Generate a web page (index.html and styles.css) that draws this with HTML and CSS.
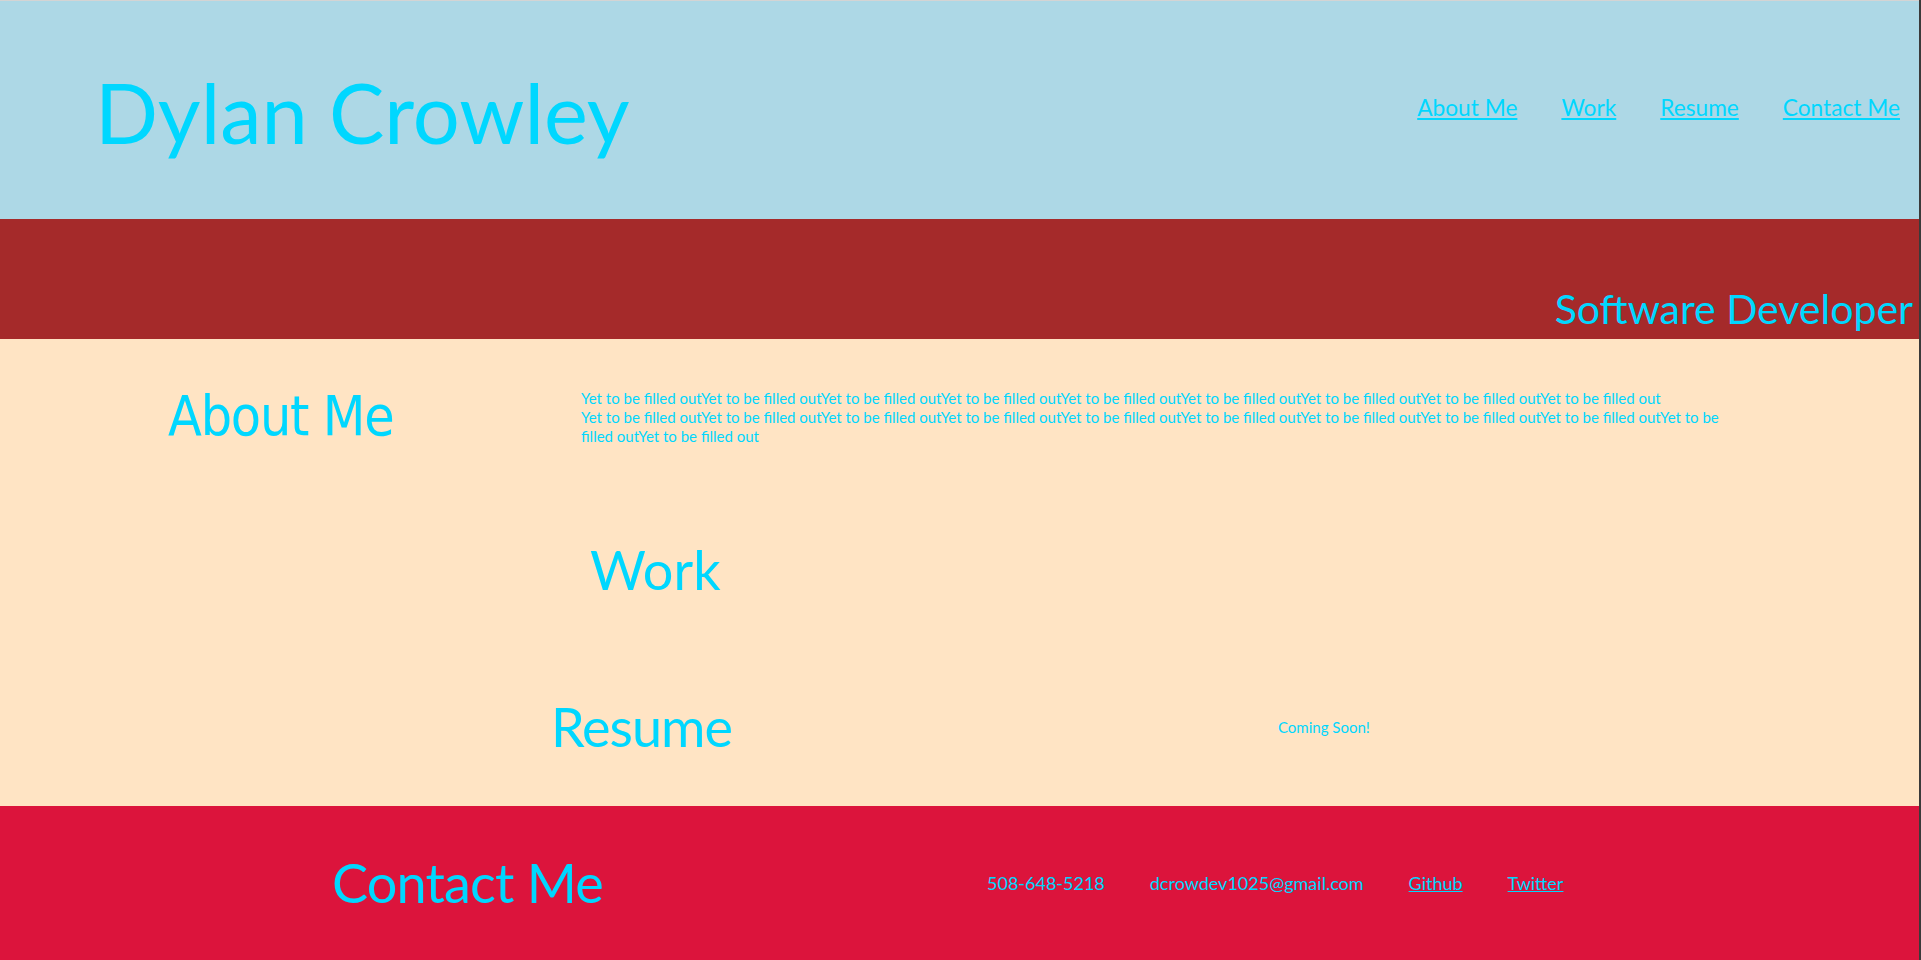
FILE: index.html
```html
<!DOCTYPE html>
<html lang="en">
<head>
<meta charset="utf-8">
<title>Dylan Crowley</title>
<link rel="stylesheet" href="styles.css">
</head>
<body>
<div class="page">
  <header class="top">
    <h1 class="name">Dylan Crowley</h1>
    <nav class="nav">
      <a href="#about">About Me</a>
      <a href="#work">Work</a>
      <a href="#resume">Resume</a>
      <a href="#contact">Contact Me</a>
    </nav>
  </header>
  <div class="banner">
    <span class="role">Software Developer</span>
  </div>
  <main class="main">
    <section class="about" id="about">
      <h2 class="about-title">About Me</h2>
      <p class="about-text">Yet to be filled outYet to be filled outYet to be filled outYet to be filled outYet to be filled outYet to be filled outYet to be filled outYet to be filled outYet to be filled out<br>Yet to be filled outYet to be filled outYet to be filled outYet to be filled outYet to be filled outYet to be filled outYet to be filled outYet to be filled outYet to be filled outYet to be filled outYet to be filled out</p>
    </section>
    <section class="work" id="work">
      <h2 class="heading">Work</h2>
    </section>
    <section class="resume" id="resume">
      <h2 class="heading resume-title">Resume</h2>
      <span class="soon">Coming Soon!</span>
    </section>
  </main>
  <footer class="contact" id="contact">
    <h2 class="heading contact-title">Contact Me</h2>
    <div class="contact-items">
      <span>508-648-5218</span>
      <span>dcrowdev1025@gmail.com</span>
      <a href="#">Github</a>
      <a href="#">Twitter</a>
    </div>
  </footer>
</div>
</body>
</html>
```
FILE: styles.css
```css
html, body {
  margin: 0;
  padding: 0;
}
body {
  font-family: Lato, "Open Sans", sans-serif;
  color: #00d7ff;
  background: #ffe4c4;
}
.page {
  border-right: 2px solid #3a3a3a;
}
a {
  color: #00d7ff;
}

.top {
  box-sizing: border-box;
  height: 219px;
  border-top: 1px solid #d4d4d4;
  background: #add8e6;
  display: flex;
  justify-content: space-between;
  align-items: center;
  padding: 0 19px 0 95px;
}
.name {
  margin: 5px 0 0;
  font-size: 83px;
  font-weight: 400;
  line-height: 1;
}
.nav {
  display: flex;
  gap: 44px;
  font-size: 22.7px;
  line-height: 1;
  margin-top: -4px;
}

.banner {
  box-sizing: border-box;
  height: 120px;
  background: #a52a2a;
  display: flex;
  justify-content: flex-end;
  align-items: flex-end;
  padding: 0 6px 10px 0;
}
.role {
  font-size: 41px;
  line-height: 1;
}

.main {
  background: #ffe4c4;
  padding: 50px 0 52px;
}
.heading {
  margin: 0;
  font-size: 54px;
  font-weight: 400;
  line-height: 1;
}
.about {
  display: flex;
  align-items: flex-start;
  padding-left: 168px;
}
.about-title {
  margin: 0;
  width: 413px;
  flex: none;
  font-family: "DejaVu Sans Condensed", "DejaVu Sans", sans-serif;
  font-size: 55px;
  font-weight: 400;
  line-height: 1;
  letter-spacing: -1.2px;
}
.about-text {
  margin: 0;
  width: 1150px;
  font-size: 15px;
  line-height: 19px;
}
.work {
  padding-left: 590px;
  margin-top: 97px;
}
.resume {
  display: flex;
  align-items: flex-start;
  padding-left: 551px;
  margin-top: 103px;
}
.resume-title {
  width: 727px;
  flex: none;
  letter-spacing: -1px;
}
.soon {
  margin-top: 18px;
  font-size: 15px;
  line-height: 19px;
}

.contact {
  box-sizing: border-box;
  height: 155px;
  background: #dc143c;
  display: flex;
  align-items: flex-start;
  padding: 50px 0 0 332px;
}
.contact-title {
  width: 655px;
  flex: none;
  letter-spacing: -0.8px;
}
.contact-items {
  margin-top: 18px;
  display: flex;
  gap: 45px;
  font-size: 18px;
  line-height: 1;
}
```
